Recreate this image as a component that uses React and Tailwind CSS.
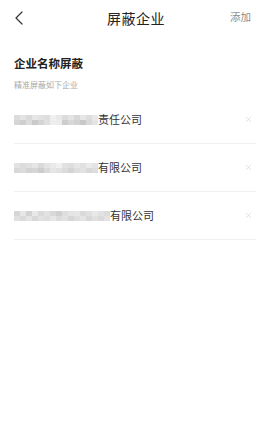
import { X } from "lucide-react";

const cjk = { fontFamily: '"Noto Sans CJK SC", "Noto Sans", sans-serif' };

// pixelated (censored) company names
const rows = [
  {
    suffix: "责任公司",
    top: ["#dcdcdc", "#e4e4e4", "#dadada", "#e6e6e6", "#e2e2e2", "#dedede", "#f0f0f0", "#e8e8e8", "#dcdcdc", "#e4e4e4", "#d8d8d8", "#e6e6e6", "#dddddd", "#e9e9e9"],
    bottom: ["#d6d6d6", "#cfcfcf", "#dcdcdc", "#c9c9c9", "#d4d4d4", "#e0e0e0", "#eeeeee", "#ececec", "#cdcdcd", "#d8d8d8", "#d2d2d2", "#c8c8c8", "#d9d9d9", "#e5e5e5"],
  },
  {
    suffix: "有限公司",
    top: ["#e2e2e2", "#dcdcdc", "#e0e0e0", "#e6e6e6", "#dadada", "#e4e4e4", "#eaeaea", "#f0f0f0", "#e2e2e2", "#dedede", "#e6e6e6", "#e0e0e0", "#eaeaea", "#e4e4e4"],
    bottom: ["#d8d8d8", "#dcdcdc", "#d2d2d2", "#d6d6d6", "#cccccc", "#dadada", "#e6e6e6", "#e2e2e2", "#dcdcdc", "#d4d4d4", "#dedede", "#e2e2e2", "#d8d8d8", "#dddddd"],
  },
  {
    suffix: "有限公司",
    top: ["#d6d6d6", "#e6e6e6", "#d2d2d2", "#e8e8e8", "#dadada", "#e2e2e2", "#d8d8d8", "#d0d0d0", "#dedede", "#e4e4e4", "#e6e6e6", "#dadada", "#e0e0e0", "#e8e8e8", "#e2e2e2", "#dcdcdc"],
    bottom: ["#e0e0e0", "#dadada", "#e4e4e4", "#d8d8d8", "#e2e2e2", "#dedede", "#e6e6e6", "#dcdcdc", "#e2e2e2", "#d6d6d6", "#dedede", "#e4e4e4", "#d8d8d8", "#e0e0e0", "#dadada", "#e4e4e4"],
  },
];

function Mosaic({ top, bottom }) {
  return (
    <div className="flex flex-col">
      <div className="flex">
        {top.map((c, i) => (
          <div key={i} className="w-[6px] h-[5px]" style={{ background: c }} />
        ))}
      </div>
      <div className="flex">
        {bottom.map((c, i) => (
          <div key={i} className="w-[6px] h-[5px]" style={{ background: c }} />
        ))}
      </div>
    </div>
  );
}

export default function App() {
  return (
    <div className="w-[270px] h-[433px] bg-white text-[#222]" style={cjk}>
      <div className="relative h-9 flex items-center justify-center">
        <svg className="absolute left-[14px] top-[11px]" width="10" height="14" viewBox="0 0 10 14" fill="none">
          <path d="M8 1 L2 7 L8 13" stroke="#333" strokeWidth="1.2" strokeLinecap="round" strokeLinejoin="round" />
        </svg>
        <span className="text-[14px] leading-none tracking-[0.5px] -mr-[2px]">屏蔽企业</span>
        <span className="absolute right-[19px] top-[12px] text-[10.5px] leading-none text-[#8c8c8c]">添加</span>
      </div>

      <div className="px-[14px]">
        <h2 className="mt-[19px] text-[11.5px] leading-4 font-semibold text-[#222]">企业名称屏蔽</h2>
        <p className="mt-[8px] text-[8px] leading-3 text-[#aaaaaa]">精准屏蔽如下企业</p>

        <div className="mt-[5px] mr-[0px] w-[242px]">
          {rows.map((r, i) => (
            <div key={i} className="h-[48px] flex items-center border-b border-[#f0f0f0]">
              <div className="flex items-center flex-1">
                <Mosaic top={r.top} bottom={r.bottom} />
                <span className="text-[11px] leading-none text-[#333]">{r.suffix}</span>
              </div>
              <X size={9} strokeWidth={1.3} className="text-[#c8c8c8] mr-[3px]" />
            </div>
          ))}
        </div>
      </div>
    </div>
  );
}
